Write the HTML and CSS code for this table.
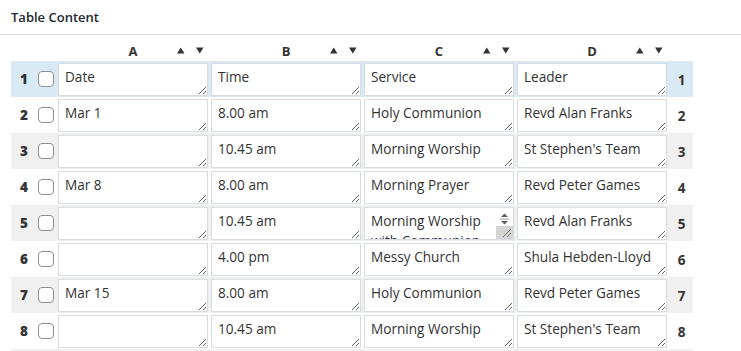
FILE: index.html
```html
<!DOCTYPE html>
<html>
<head>
<meta charset="utf-8">
<link rel="stylesheet" href="styles.css">
</head>
<body>
<div class="title">Table Content</div>
<table class="grid">
  <thead>
    <tr>
      <th class="num"></th>
      <th><div class="hcell"><span></span><span class="letter">A</span><svg class="arrows" width="27" height="7" viewBox="0 0 27 7"><path d="M0 6.5 L3.75 0.5 L7.5 6.5 Z M19 0.5 L26.5 0.5 L22.75 6.5 Z" fill="#333"/></svg></div></th>
      <th><div class="hcell"><span></span><span class="letter">B</span><svg class="arrows" width="27" height="7" viewBox="0 0 27 7"><path d="M0 6.5 L3.75 0.5 L7.5 6.5 Z M19 0.5 L26.5 0.5 L22.75 6.5 Z" fill="#333"/></svg></div></th>
      <th><div class="hcell"><span></span><span class="letter">C</span><svg class="arrows" width="27" height="7" viewBox="0 0 27 7"><path d="M0 6.5 L3.75 0.5 L7.5 6.5 Z M19 0.5 L26.5 0.5 L22.75 6.5 Z" fill="#333"/></svg></div></th>
      <th><div class="hcell"><span></span><span class="letter">D</span><svg class="arrows" width="27" height="7" viewBox="0 0 27 7"><path d="M0 6.5 L3.75 0.5 L7.5 6.5 Z M19 0.5 L26.5 0.5 L22.75 6.5 Z" fill="#333"/></svg></div></th>
      <th class="rnum"></th>
    </tr>
  </thead>
  <tbody>
    <tr class="sel">
      <td class="num"><div class="lead"><b>1</b><input type="checkbox" class="cb"></div></td>
      <td><textarea>Date</textarea></td>
      <td><textarea>Time</textarea></td>
      <td><textarea>Service</textarea></td>
      <td><textarea>Leader</textarea></td>
      <td class="rnum">1</td>
    </tr>
    <tr>
      <td class="num"><div class="lead"><b>2</b><input type="checkbox" class="cb"></div></td>
      <td><textarea>Mar 1</textarea></td>
      <td><textarea>8.00 am</textarea></td>
      <td><textarea>Holy Communion</textarea></td>
      <td><textarea>Revd Alan Franks</textarea></td>
      <td class="rnum">2</td>
    </tr>
    <tr class="alt">
      <td class="num"><div class="lead"><b>3</b><input type="checkbox" class="cb"></div></td>
      <td><textarea></textarea></td>
      <td><textarea>10.45 am</textarea></td>
      <td><textarea>Morning Worship</textarea></td>
      <td><textarea>St Stephen's Team</textarea></td>
      <td class="rnum">3</td>
    </tr>
    <tr>
      <td class="num"><div class="lead"><b>4</b><input type="checkbox" class="cb"></div></td>
      <td><textarea>Mar 8</textarea></td>
      <td><textarea>8.00 am</textarea></td>
      <td><textarea>Morning Prayer</textarea></td>
      <td><textarea>Revd Peter Games</textarea></td>
      <td class="rnum">4</td>
    </tr>
    <tr class="alt">
      <td class="num"><div class="lead"><b>5</b><input type="checkbox" class="cb"></div></td>
      <td><textarea></textarea></td>
      <td><textarea>10.45 am</textarea></td>
      <td>
        <div class="tawrap">
          <textarea class="scroll">Morning Worship with Communion</textarea>
          <div class="sbar">
            <svg class="sbtn" width="17" height="14" viewBox="0 0 17 14"><path d="M5 5 L8.5 1.5 L12 5 Z" fill="#606060"/><rect x="4" y="6.5" width="9" height="1" fill="#a0a0a0"/><path d="M5 9 L12 9 L8.5 12.5 Z" fill="#606060"/></svg>
            <div class="sthumb">
              <svg class="grip" width="11" height="11" viewBox="0 0 11 11"><path d="M10 2 L2 10 M10 6 L6 10" stroke="#777" stroke-width="1"/></svg>
            </div>
          </div>
        </div>
      </td>
      <td><textarea>Revd Alan Franks</textarea></td>
      <td class="rnum">5</td>
    </tr>
    <tr>
      <td class="num"><div class="lead"><b>6</b><input type="checkbox" class="cb"></div></td>
      <td><textarea></textarea></td>
      <td><textarea>4.00 pm</textarea></td>
      <td><textarea>Messy Church</textarea></td>
      <td><textarea>Shula Hebden-Lloyd</textarea></td>
      <td class="rnum">6</td>
    </tr>
    <tr class="alt">
      <td class="num"><div class="lead"><b>7</b><input type="checkbox" class="cb"></div></td>
      <td><textarea>Mar 15</textarea></td>
      <td><textarea>8.00 am</textarea></td>
      <td><textarea>Holy Communion</textarea></td>
      <td><textarea>Revd Peter Games</textarea></td>
      <td class="rnum">7</td>
    </tr>
    <tr>
      <td class="num"><div class="lead"><b>8</b><input type="checkbox" class="cb"></div></td>
      <td><textarea></textarea></td>
      <td><textarea>10.45 am</textarea></td>
      <td><textarea>Morning Worship</textarea></td>
      <td><textarea>St Stephen's Team</textarea></td>
      <td class="rnum">8</td>
    </tr>
    <tr class="alt">
      <td class="num"></td>
      <td></td>
      <td></td>
      <td></td>
      <td></td>
      <td class="rnum"></td>
    </tr>
  </tbody>
</table>
</body>
</html>
```
FILE: styles.css
```css
html, body {
  margin: 0;
  padding: 0;
  background: #fff;
  font-family: "Open Sans", "Noto Sans", sans-serif;
  color: #333;
  overflow: hidden;
}
.title {
  font-size: 13px;
  font-weight: 600;
  color: #23282d;
  padding: 8px 11px 0;
  height: 35px;
  box-sizing: border-box;
  border-bottom: 1px solid #dcdcde;
}
.grid {
  margin: 5px 0 0 11px;
  border-collapse: collapse;
  border-spacing: 0;
}
.grid th {
  height: 21px;
  padding: 0;
  font-weight: 700;
  color: #333;
}
.hcell {
  display: grid;
  grid-template-columns: 1fr auto 1fr;
  align-items: center;
  width: 150px;
}
.letter {
  font-size: 13px;
}
.arrows {
  justify-self: end;
  margin-right: 4px;
  display: block;
}
.grid td {
  padding: 0 3px 0 0;
  height: 36px;
  vertical-align: top;
}
.grid td.num {
  width: 47px;
  padding: 0;
  vertical-align: middle;
}
.lead {
  display: flex;
  align-items: center;
  gap: 10px;
  padding-left: 9px;
  font-size: 13.5px;
  font-weight: 700;
}
.lead b {
  width: 8px;
  text-align: center;
}
.cb {
  appearance: none;
  -webkit-appearance: none;
  width: 16px;
  height: 16px;
  margin: 0;
  border: 1px solid #8c8f94;
  border-radius: 4px;
  background: #fff;
  box-sizing: border-box;
}
.grid td.rnum {
  width: 23px;
  padding: 2px 0 0;
  text-align: center;
  vertical-align: middle;
  font-size: 13.5px;
  font-weight: 700;
  box-sizing: border-box;
}
tr.sel td { background: #d9eaf5; }
tr.alt td { background: #f0f0f0; }
textarea {
  display: block;
  box-sizing: border-box;
  width: 150px;
  height: 33px;
  margin-top: 2px;
  border: 1px solid #d7dde2;
  border-radius: 0;
  padding: 3px 6px;
  font-family: "Open Sans", "Noto Sans", sans-serif;
  font-size: 13.6px;
  line-height: 20px;
  color: #333;
  background: #fff;
  overflow: hidden;
}
.tawrap {
  position: relative;
  width: 150px;
}
textarea.scroll {
  padding-right: 20px;
}
.sbar {
  position: absolute;
  top: 3px;
  right: 1px;
  bottom: 1px;
  width: 17px;
  display: flex;
  flex-direction: column;
  background: #fff;
}
.sbtn {
  display: block;
  margin-top: 2px;
}
.sthumb {
  flex: 1;
  background: #d4d4d4;
  position: relative;
}
.grip {
  position: absolute;
  right: 1px;
  bottom: 1px;
}
```
